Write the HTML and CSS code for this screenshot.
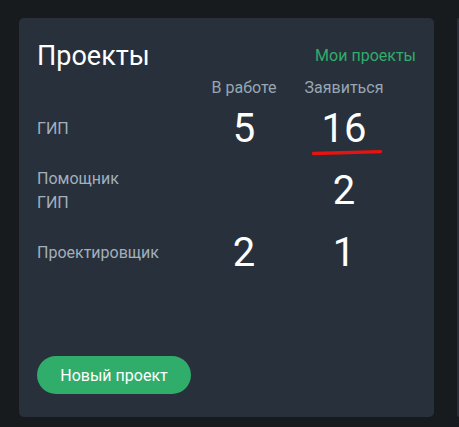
FILE: index.html
```html
<!DOCTYPE html>
<html lang="ru">
<head>
<meta charset="utf-8">
<title>Проекты</title>
<link rel="stylesheet" href="styles.css">
</head>
<body>
<div class="board">
  <section class="card">
    <div class="card-head">
      <h2 class="title">Проекты</h2>
      <a class="link" href="#">Мои проекты</a>
    </div>
    <div class="cols">
      <span></span>
      <span class="col-h">В работе</span>
      <span class="col-h">Заявиться</span>
    </div>
    <div class="table">
      <div class="label">ГИП</div>
      <div class="num">5</div>
      <div class="num mark">16
        <svg class="underline" width="72" height="8" viewBox="0 0 72 8"><path d="M2.5 5.5 Q 36 4.6 69.5 3.6" fill="none" stroke="#e8130f" stroke-width="3.4" stroke-linecap="round"/></svg>
      </div>
      <div class="label">Помощник<br>ГИП</div>
      <div class="num"></div>
      <div class="num">2</div>
      <div class="label">Проектировщик</div>
      <div class="num">2</div>
      <div class="num">1</div>
    </div>
    <button class="btn">Новый проект</button>
  </section>
  <section class="card next"></section>
</div>
</body>
</html>
```
FILE: styles.css
```css
html, body {
  margin: 0;
  padding: 0;
  background: #181b1e;
  overflow: hidden;
}
body {
  font-family: Roboto, "Liberation Sans", sans-serif;
  padding: 18px 0 0 19px;
}
.board {
  display: flex;
  gap: 23px;
}
.card {
  flex: 0 0 415px;
  height: 399px;
  box-sizing: border-box;
  background: #28313b;
  border-radius: 5px;
  padding: 22px 18px 23px 18px;
  display: flex;
  flex-direction: column;
}
.card.next {
  flex: 0 0 2px;
  padding: 0;
  border-radius: 2px 0 0 2px;
}
.card-head {
  display: flex;
  justify-content: space-between;
  align-items: center;
  height: 32px;
}
.title {
  margin: 0;
  font-weight: 400;
  font-size: 27px;
  line-height: 32px;
  color: #ffffff;
}
.link {
  color: #2fad69;
  font-size: 16px;
  line-height: 20px;
  text-decoration: none;
}
.cols {
  display: grid;
  grid-template-columns: 1fr 100px 100px;
  margin: 5.5px 22px 0 0;
  line-height: 20px;
}
.col-h {
  font-size: 16px;
  color: #98a6b3;
  text-align: center;
}
.table {
  display: grid;
  grid-template-columns: 1fr 100px 100px;
  margin: 9.5px 22px 0 0;
  row-gap: 16px;
  align-items: center;
}
.label {
  font-size: 16px;
  line-height: 24px;
  color: #a3afbb;
}
.num {
  font-size: 40px;
  line-height: 44px;
  color: #ffffff;
  text-align: center;
  position: relative;
}
.underline {
  position: absolute;
  left: 17px;
  top: 41px;
}
.btn {
  margin-top: auto;
  align-self: flex-start;
  width: 154px;
  height: 38px;
  border: none;
  border-radius: 19px;
  background: #30ad6b;
  color: #ffffff;
  font-family: Roboto, "Liberation Sans", sans-serif;
  font-size: 16px;
  padding: 0;
}
```
